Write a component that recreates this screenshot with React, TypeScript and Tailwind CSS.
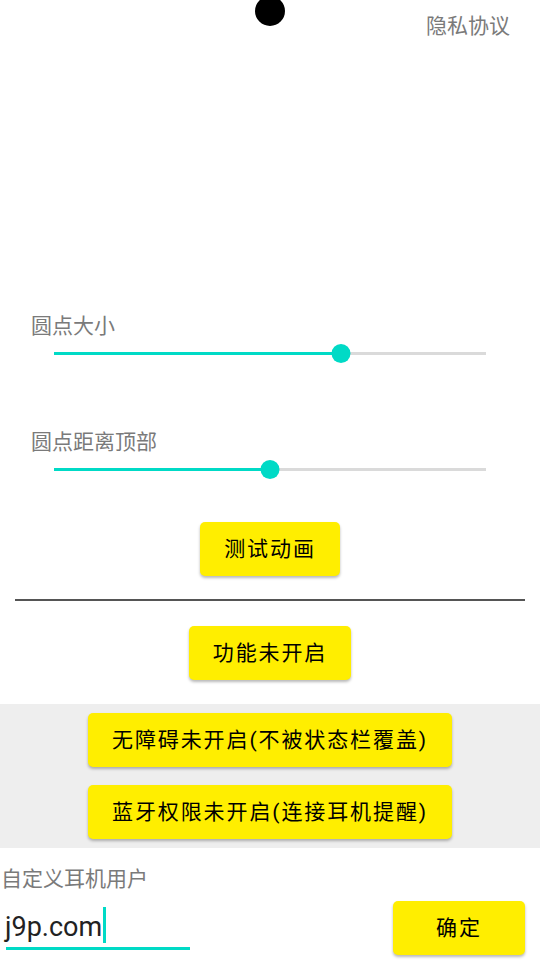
import React from 'react';

const TEAL = '#00dac6';

function Slider({ value }: { value: number }) {
  const pct = `${value * 100}%`;
  return (
    <div className="relative ml-[54px] h-[32px] w-[432px]">
      <div className="absolute left-0 right-0 top-[15px] h-[3px] bg-[#dadada]" />
      <div className="absolute left-0 top-[15px] h-[3px] bg-[#00dac6]" style={{ width: pct }} />
      <div
        className="absolute top-[7px] h-[19px] w-[19px] -translate-x-1/2 rounded-full bg-[#00dac6]"
        style={{ left: pct }}
      />
    </div>
  );
}

function YellowButton({ label, width }: { label: string; width: string }) {
  return (
    <button
      className={`${width} flex h-[54px] items-center justify-center rounded-[5px] bg-[#ffee00] text-[21px] leading-[21px] tracking-[1.9px] text-black shadow-[0_2px_3px_rgba(0,0,0,0.28)]`}
    >
      {label}
    </button>
  );
}

export default function App() {
  return (
    <div className="relative flex h-[960px] w-[540px] flex-col overflow-hidden bg-white font-[Roboto,'Noto_Sans_CJK_SC',sans-serif]">
      {/* floating dot preview */}
      <div className="absolute left-[255px] top-[-4px] h-[30px] w-[30px] rounded-full bg-black" />

      {/* header */}
      <div className="flex justify-end pr-[30px] pt-[16px]">
        <span className="text-[21px] leading-[21px] text-[#7a7a7a]">隐私协议</span>
      </div>

      {/* dot size */}
      <div className="mt-[279px] pl-[31px] text-[21px] leading-[21px] text-[#7a7a7a]">圆点大小</div>
      <Slider value={0.665} />

      {/* dot top distance */}
      <div className="mt-[63px] pl-[31px] text-[21px] leading-[21px] text-[#7a7a7a]">圆点距离顶部</div>
      <Slider value={0.5} />

      <div className="mt-[37px] flex justify-center">
        <YellowButton label="测试动画" width="w-[140px]" />
      </div>

      <div className="mx-[15px] mt-[23px] h-[2px] bg-[#555555]" />

      <div className="mt-[25px] flex justify-center">
        <YellowButton label="功能未开启" width="w-[162px]" />
      </div>

      {/* permissions */}
      <div className="mt-[24px] flex flex-col items-center gap-[18px] bg-[#eeeeee] py-[9px]">
        <YellowButton label="无障碍未开启(不被状态栏覆盖)" width="w-[364px]" />
        <YellowButton label="蓝牙权限未开启(连接耳机提醒)" width="w-[364px]" />
      </div>

      {/* custom headset user */}
      <div className="mt-[21px] pl-[1px] text-[21px] leading-[21px] text-[#7a7a7a]">自定义耳机用户</div>
      <div className="mt-[11px] flex items-start justify-between pr-[15px]">
        <div className="ml-[6px] flex w-[184px] flex-col">
          <div className="mt-[6px] flex items-start">
            <span className="-ml-[1px] mt-[4px] text-[27px] leading-[32px] text-[#222222]">j9p.com</span>
            <span className="ml-[1px] h-[36px] w-[3px]" style={{ backgroundColor: TEAL }} />
          </div>
          <div className="mt-[4px] h-[3px] bg-[#00dac6]" />
        </div>
        <YellowButton label="确定" width="w-[132px]" />
      </div>
    </div>
  );
}
